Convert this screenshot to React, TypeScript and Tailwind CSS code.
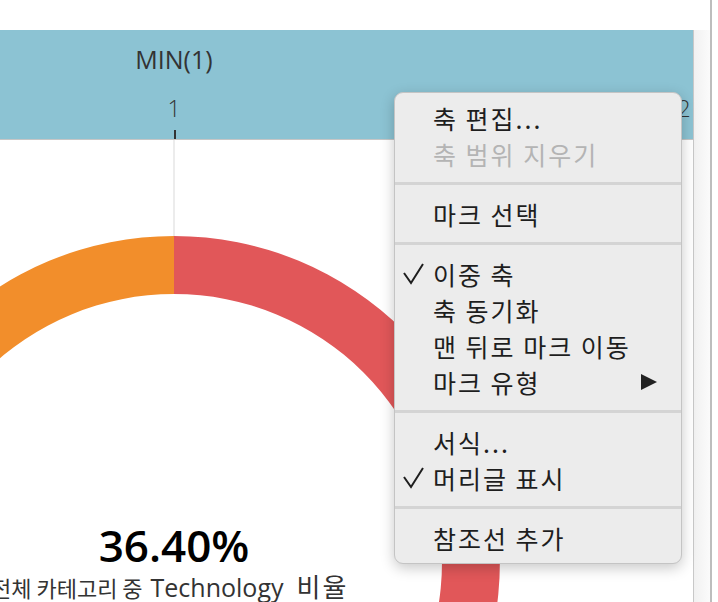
import React from "react";

const KR = { fontFamily: '"Noto Sans CJK KR", "Noto Sans", sans-serif' };
const OS = { fontFamily: '"Open Sans", "Noto Sans CJK KR", sans-serif' };

function Check() {
  return (
    <svg width="24" height="24" viewBox="0 0 24 24" className="absolute left-[7px] top-[6px]">
      <polyline points="2,11 9,21 21,2" fill="none" stroke="#1e1e1e" strokeWidth="2" strokeLinejoin="miter" />
    </svg>
  );
}

function Item({ label, checked, disabled, arrow }: { label: string; checked?: boolean; disabled?: boolean; arrow?: boolean }) {
  return (
    <div className={`relative h-[36px] flex items-center pl-[38px] pr-[24px] text-[25px] tracking-[2px] ${disabled ? "text-[#b4b4b4]" : "text-[#1e1e1e]"}`} style={KR}>
      {checked && <Check />}
      <span className="flex-1 leading-none">{label}</span>
      {arrow && (
        <svg width="16" height="16" viewBox="0 0 16 16">
          <polygon points="0,0 16,8 0,16" fill="#222" />
        </svg>
      )}
    </div>
  );
}

function Sep() {
  return <div className="mt-[10px] mb-[11px] h-[3px] bg-[#d4d4d4]" />;
}

export default function App() {
  const cx = 174;
  const cy = 422;
  const R = 326;
  const r = 268;
  return (
    <div className="relative w-[718px] h-[602px] overflow-hidden bg-white flex">
      <div className="w-[694px] flex flex-col">
        <div className="h-[30px] bg-white" />
        <div className="flex-1 flex flex-col border-r border-[#c8c8c8]">
          <div className="relative h-[110px] bg-[#8cc3d3] border-b border-[#c6c6c6] text-[#333]" style={OS}>
            <div className="absolute left-[74px] w-[200px] top-[13px] text-center text-[25px] leading-[32px]">MIN(1)</div>
            <div className="absolute left-[124px] w-[100px] top-[62px] text-center text-[23px] font-light leading-[32px]">1</div>
            <div className="absolute left-[174px] top-[100px] w-[2px] h-[9px] bg-[#333]" />
            <div className="absolute left-[634px] w-[100px] top-[62px] text-center text-[23px] font-light leading-[32px]">2</div>
          </div>
          <div className="relative flex-1">
            <svg className="absolute left-0 top-0" width="693" height="462" viewBox="0 0 693 462">
              <line x1={cx} y1={0} x2={cx} y2={120} stroke="#ececec" strokeWidth="2" />
              <path d={`M ${cx} ${cy - R} A ${R} ${R} 0 0 1 ${cx} ${cy + R} L ${cx} ${cy + r} A ${r} ${r} 0 0 0 ${cx} ${cy - r} Z`} fill="#e15759" />
              <path d={`M ${cx} ${cy - R} A ${R} ${R} 0 0 0 ${cx} ${cy + R} L ${cx} ${cy + r} A ${r} ${r} 0 0 1 ${cx} ${cy - r} Z`} fill="#f28e2b" />
            </svg>
            <div className="absolute left-0 w-[348px] top-[380px] text-center text-[44px] font-semibold leading-[50px] text-black" style={OS}>36.40%</div>
            <div className="absolute left-[-9px] top-[430px] flex items-baseline text-[#333] whitespace-nowrap leading-[32px]" style={OS}>
              <span className="text-[22px]" style={KR}>전체 카테고리 중</span>
              <span className="text-[25px] ml-[8px]">Technology</span>
              <span className="text-[26px] ml-[13px] tracking-[2px]" style={KR}>비율</span>
            </div>
          </div>
        </div>
      </div>
      <div className="w-[16px] flex flex-col">
        <div className="h-[30px] bg-white" />
        <div className="flex-1 bg-gradient-to-r from-[#f1f1f1] to-[#fbfbfb]" />
      </div>
      <div className="w-[2px] bg-[#bdbdbd]" />
      <div className="flex-1 bg-white" />

      <div className="absolute left-[394px] top-[92px] w-[288px] h-[472px] rounded-[9px] bg-[#ececec] border border-[#c4c4c4] shadow-[0_4px_14px_rgba(0,0,0,0.22)] pt-[7px] overflow-hidden">
        <Item label="축 편집..." />
        <Item label="축 범위 지우기" disabled />
        <Sep />
        <Item label="마크 선택" />
        <Sep />
        <Item label="이중 축" checked />
        <Item label="축 동기화" />
        <Item label="맨 뒤로 마크 이동" />
        <Item label="마크 유형" arrow />
        <Sep />
        <Item label="서식..." />
        <Item label="머리글 표시" checked />
        <Sep />
        <Item label="참조선 추가" />
      </div>
    </div>
  );
}
